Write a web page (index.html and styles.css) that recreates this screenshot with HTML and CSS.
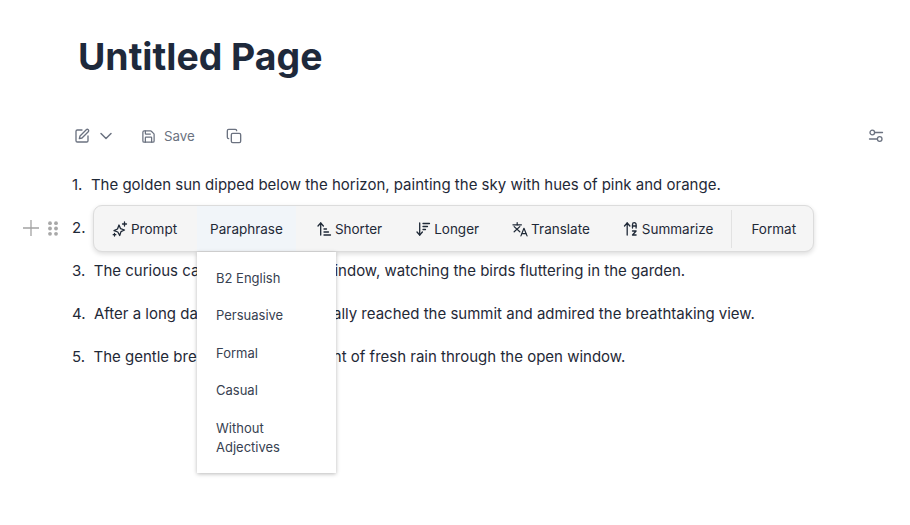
FILE: index.html
```html
<!DOCTYPE html>
<html lang="en">
<head>
<meta charset="utf-8">
<title>Untitled Page</title>
<link rel="stylesheet" href="styles.css">
</head>
<body>
<main class="page">
  <h1 class="title">Untitled Page</h1>
  <div class="toolbar">
    <div class="tools-left">
      <span class="tool-group">
        <svg class="ico ico16" viewBox="0 0 24 24"><path d="M12 3H5a2 2 0 0 0-2 2v14a2 2 0 0 0 2 2h14a2 2 0 0 0 2-2v-7"/><path d="M18.400 2.600a2.100 2.100 0 0 1 3 3L12 15l-4 1 1-4z"/></svg>
        <svg class="ico chev" viewBox="0 0 24 24"><path d="m6 9 6 6 6-6"/></svg>
      </span>
      <span class="tool-group save">
        <svg class="ico ico15" viewBox="0 0 24 24"><path d="M15.200 3a2 2 0 0 1 1.400.6l3.800 3.800a2 2 0 0 1 .6 1.400V19a2 2 0 0 1-2 2H5a2 2 0 0 1-2-2V5a2 2 0 0 1 2-2z"/><path d="M17 21v-7a1 1 0 0 0-1-1H8a1 1 0 0 0-1 1v7"/><path d="M7 3v4a1 1 0 0 0 1 1h7"/></svg>
        <span>Save</span>
      </span>
      <svg class="ico ico16 copy" viewBox="0 0 24 24"><rect x="8" y="8" width="14" height="14" rx="2"/><path d="M4 16c-1.100 0-2-.9-2-2V4c0-1.100.9-2 2-2h10c1.100 0 2 .9 2 2"/></svg>
    </div>
    <svg class="ico sliders" viewBox="0 0 16 16"><path d="M7 4.500h7.500"/><path d="M1.500 11H9"/><circle cx="4.300" cy="4.500" r="2.300"/><circle cx="11.700" cy="11" r="2.300"/></svg>
  </div>
  <ol class="list">
    <li>The golden sun dipped below the horizon, painting the sky with hues of pink and orange.</li>
    <li>The quick brown fox jumped over the lazy dog near the quiet stream.</li>
    <li>The curious cat sat by the open window, watching the birds fluttering in the garden.</li>
    <li>After a long day of hiking, they finally reached the summit and admired the breathtaking view.</li>
    <li>The gentle breeze carried the scent of fresh rain through the open window.</li>
  </ol>
</main>
<div class="handles">
  <svg class="plus" viewBox="0 0 16 16"><path d="M8 0v16M0 8h16"/></svg>
  <svg class="grip" viewBox="0 0 10 15"><circle cx="2" cy="2.200" r="1.900"/><circle cx="8" cy="2.200" r="1.900"/><circle cx="2" cy="7.500" r="1.900"/><circle cx="8" cy="7.500" r="1.900"/><circle cx="2" cy="12.800" r="1.900"/><circle cx="8" cy="12.800" r="1.900"/></svg>
</div>
<div class="bubble">
  <button class="item first"><svg class="ico bi" viewBox="0 0 16 16"><path d="M7 4 8.600 7.700 12.500 9 9 10.600 7.700 14.500 5.800 11 2 9.700 5.500 8z"/><path d="M12.500 1v4M10.500 3h4M2.500 12.500v2.500M1.200 13.700h2.600"/></svg>Prompt</button>
  <button class="item active">Paraphrase</button>
  <button class="item"><svg class="ico bi" viewBox="0 0 16 16"><path d="m2 5 2.700-3L7.400 5"/><path d="M4.700 2v12"/><path d="M8 8h2.500M8 11h4.500M8 14h6.500"/></svg>Shorter</button>
  <button class="item"><svg class="ico bi" viewBox="0 0 16 16"><path d="m2 11 2.700 3 2.700-3"/><path d="M4.700 14V2"/><path d="M8 2.500h6.500M8 5.500h4.500M8 8.500h2.500"/></svg>Longer</button>
  <button class="item"><svg class="ico bi" viewBox="0 0 17 16"><path d="M1 3.500h9"/><path d="M5.500 1.300v2.200"/><path d="m2.300 5.500 6 5.500"/><path d="m8.300 5.500-6 5.500"/><path d="m9.500 15.300 3.200-8 3.300 8"/><path d="M10.700 13h4"/></svg>Translate</button>
  <button class="item"><svg class="ico bi" viewBox="0 0 16 16"><path d="m1.500 5 2.700-3 2.700 3"/><path d="M4.200 2v12"/><path d="M9.500 7V3.500a1.800 1.800 0 0 1 3.600 0V7"/><path d="M9.500 5h3.600"/><path d="M9.500 10h3.600l-3.600 4h3.600"/></svg>Summarize</button>
  <span class="sep"></span>
  <button class="item last">Format</button>
</div>
<ul class="menu">
  <li>B2 English</li>
  <li>Persuasive</li>
  <li>Formal</li>
  <li>Casual</li>
  <li>Without Adjectives</li>
</ul>
</body>
</html>
```
FILE: styles.css
```css
* { box-sizing: border-box; }
html, body { margin: 0; padding: 0; background: #fff; }
body { width: 910px; height: 525px; overflow: hidden; position: relative; font-family: Inter, sans-serif; color: #1f2937; }
.page { padding: 0 24px 0 72px; }
.title { margin: 0; padding: 32px 0 0 6px; font-size: 37.400px; line-height: 50px; font-weight: 700; color: #1e293b; height: 122px; }
.toolbar { display: flex; justify-content: space-between; align-items: center; height: 28px; padding: 0 2px 0 2px; color: #6b7280; }
.tools-left { display: flex; align-items: center; gap: 25px; }
.tool-group { display: flex; align-items: center; gap: 6px; }
.save { gap: 8px; font-size: 13.300px; }
.ico { fill: none; stroke: currentColor; stroke-width: 2; stroke-linecap: round; stroke-linejoin: round; display: block; flex: none; }
.ico16 { width: 16px; height: 16px; }
.ico15 { width: 15px; height: 15px; }
.chev { width: 20px; height: 20px; stroke-width: 1.800; }
.copy { margin-left: 6px; }
.sliders { width: 16px; height: 16px; stroke-width: 1.300; }
.bi { width: 16px; height: 16px; stroke-width: 1.300; color: #1f2937; }
.list { margin: 23px 0 0; padding: 0; list-style: none; counter-reset: n; font-size: 15px; line-height: 23px; color: #1f2937; }
.list li { counter-increment: n; margin-bottom: 20px; white-space: nowrap; }
.list li::before { content: counter(n) ".\00a0\00a0"; }
.handles { position: absolute; left: 23px; top: 220px; display: flex; align-items: center; gap: 9px; }
.plus { width: 16px; height: 16px; stroke: #a3a3a3; stroke-width: 1.300; fill: none; display: block; }
.grip { width: 10px; height: 15px; fill: #a8a8a8; display: block; }
.bubble { position: absolute; left: 93px; top: 205px; width: 721px; height: 47px; display: flex; align-items: center; background: #f5f5f5; border: 1px solid #dcdcdc; border-radius: 9px; box-shadow: 0 2px 5px rgba(0,0,0,.14); padding: 0 0 0 18px; }
.item { display: flex; align-items: center; gap: 3px; height: 100%; border: 0; background: none; font: 400 13.500px Inter, sans-serif; color: #1f2937; padding: 0; margin-right: 33px; white-space: nowrap; }
.item.first { margin-right: 20px; }
.item.active { background: #f1f5f9; margin-right: 20px; padding: 0 13px; }
.sep { width: 1px; height: 38px; background: #e2e2e2; margin: 0 19px 0 -15px; flex: none; }
.item.last { margin: 0; }
.menu { position: absolute; left: 197px; top: 252px; width: 139px; height: 221px; margin: 0; padding: 16.700px 19px 0; list-style: none; background: #fff; box-shadow: 0 1px 4px rgba(0,0,0,.28); font-size: 13px; line-height: 19.500px; color: #374151; }
.menu li { margin-bottom: 18px; }
```
